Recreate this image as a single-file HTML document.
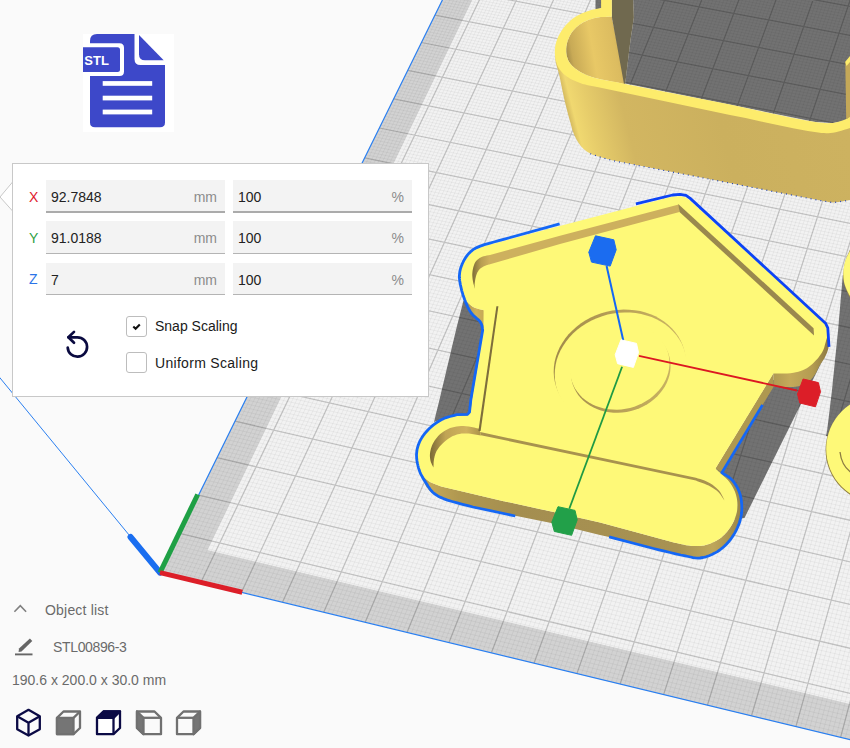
<!DOCTYPE html>
<html><head><meta charset="utf-8"><title>Cura</title>
<style>
html,body{margin:0;padding:0}
body{width:850px;height:748px;overflow:hidden;background:#fafafa;position:relative;font-family:"Liberation Sans",sans-serif;}
#scene{position:absolute;left:0;top:0}
.abs{position:absolute}
#stl{position:absolute;left:83px;top:34px;width:91px;height:98px;background:#fff}
#panel{position:absolute;left:12px;top:163px;width:415px;height:232px;background:#fff;border:1px solid #c8c8c8;box-sizing:content-box}
.fld{position:absolute;height:31px;background:#f3f3f3;border-bottom:1px solid #b4b4b4;font-size:14px;color:#222}
.fld span{position:absolute;top:9px;line-height:16px}
.fld[style*="height:32px"] span{top:9px}
.fld .u{color:#8c8c8c}
.lbl{position:absolute;font-size:14px;line-height:16px}
.cb{position:absolute;width:19px;height:19px;border:1px solid #bdbdbd;border-radius:3px;background:#fff}
.cbl{position:absolute;font-size:14px;line-height:16px;color:#1a1a1a}
.t{position:absolute;font-size:14px;line-height:16px;color:#6a6a6a;white-space:nowrap}

</style></head><body>
<svg id="scene" width="850" height="748" viewBox="0 0 850 748">
<polygon points="160.4,572.7 1305.0,849.9 1428.2,-155.4 587.7,-295.1" fill="#d2d2d2"/>
<polygon points="207.4,550.1 1309.4,813.9 1428.2,-155.4 612.1,-291.1" fill="#f2f2f2"/>
<path d="M164.4 573.7L590.8 -294.6M168.5 574.7L593.8 -294.1M172.5 575.6L596.9 -293.6M176.5 576.6L599.9 -293.1M180.6 577.6L602.9 -292.6M184.6 578.6L606.0 -292.1M188.7 579.5L609.0 -291.6M192.7 580.5L612.1 -291.1M196.8 581.5L615.1 -290.6M204.9 583.5L621.2 -289.6M208.9 584.5L624.2 -289.0M213.0 585.4L627.3 -288.5M217.1 586.4L630.4 -288.0M221.1 587.4L633.4 -287.5M225.2 588.4L636.5 -287.0M229.3 589.4L639.5 -286.5M233.4 590.4L642.6 -286.0M237.4 591.4L645.6 -285.5M245.6 593.3L651.8 -284.5M249.7 594.3L654.8 -284.0M253.8 595.3L657.9 -283.5M257.9 596.3L661.0 -282.9M262.0 597.3L664.0 -282.4M266.1 598.3L667.1 -281.9M270.2 599.3L670.2 -281.4M274.3 600.3L673.2 -280.9M278.4 601.3L676.3 -280.4M286.6 603.3L682.5 -279.4M290.7 604.3L685.5 -278.9M294.8 605.2L688.6 -278.3M298.9 606.2L691.7 -277.8M303.1 607.2L694.8 -277.3M307.2 608.2L697.9 -276.8M311.3 609.2L701.0 -276.3M315.4 610.2L704.1 -275.8M319.6 611.2L707.1 -275.3M327.8 613.2L713.3 -274.2M332.0 614.2L716.4 -273.7M336.1 615.3L719.5 -273.2M340.3 616.3L722.6 -272.7M344.4 617.3L725.7 -272.2M348.6 618.3L728.8 -271.7M352.7 619.3L731.9 -271.2M356.9 620.3L735.0 -270.6M361.0 621.3L738.1 -270.1M369.4 623.3L744.3 -269.1M373.5 624.3L747.4 -268.6M377.7 625.3L750.5 -268.1M381.9 626.3L753.7 -267.5M386.1 627.3L756.8 -267.0M390.2 628.4L759.9 -266.5M394.4 629.4L763.0 -266.0M398.6 630.4L766.1 -265.5M402.8 631.4L769.2 -264.9M411.2 633.4L775.5 -263.9M415.4 634.4L778.6 -263.4M419.6 635.5L781.7 -262.9M423.8 636.5L784.9 -262.4M428.0 637.5L788.0 -261.8M432.2 638.5L791.1 -261.3M436.4 639.5L794.2 -260.8M440.6 640.6L797.4 -260.3M444.8 641.6L800.5 -259.8M453.3 643.6L806.8 -258.7M457.5 644.6L809.9 -258.2M461.7 645.7L813.1 -257.7M465.9 646.7L816.2 -257.1M470.2 647.7L819.3 -256.6M474.4 648.7L822.5 -256.1M478.6 649.8L825.6 -255.6M482.9 650.8L828.8 -255.1M487.1 651.8L831.9 -254.5M495.6 653.9L838.2 -253.5M499.9 654.9L841.4 -253.0M504.1 655.9L844.5 -252.4M508.4 657.0L847.7 -251.9M512.7 658.0L850.9 -251.4M516.9 659.0L854.0 -250.9M521.2 660.1L857.2 -250.3M525.5 661.1L860.3 -249.8M529.7 662.1L863.5 -249.3M538.3 664.2L869.8 -248.2M542.6 665.2L873.0 -247.7M546.8 666.3L876.2 -247.2M551.1 667.3L879.4 -246.6M555.4 668.4L882.5 -246.1M559.7 669.4L885.7 -245.6M564.0 670.4L888.9 -245.1M568.3 671.5L892.1 -244.5M572.6 672.5L895.2 -244.0M581.2 674.6L901.6 -242.9M585.5 675.6L904.8 -242.4M589.8 676.7L908.0 -241.9M594.2 677.7L911.2 -241.4M598.5 678.8L914.4 -240.8M602.8 679.8L917.5 -240.3M607.1 680.9L920.7 -239.8M611.4 681.9L923.9 -239.2M615.8 683.0L927.1 -238.7M624.4 685.1L933.5 -237.6M628.8 686.1L936.7 -237.1M633.1 687.2L939.9 -236.6M637.5 688.2L943.1 -236.0M641.8 689.3L946.3 -235.5M646.2 690.3L949.5 -235.0M650.5 691.4L952.7 -234.5M654.9 692.4L956.0 -233.9M659.2 693.5L959.2 -233.4M668.0 695.6L965.6 -232.3M672.3 696.7L968.8 -231.8M676.7 697.7L972.0 -231.2M681.1 698.8L975.2 -230.7M685.5 699.8L978.5 -230.2M689.8 700.9L981.7 -229.6M694.2 702.0L984.9 -229.1M698.6 703.0L988.1 -228.6M703.0 704.1L991.4 -228.0M711.8 706.2L997.8 -227.0M716.2 707.3L1001.0 -226.4M720.6 708.3L1004.3 -225.9M725.0 709.4L1007.5 -225.3M729.4 710.5L1010.8 -224.8M733.8 711.6L1014.0 -224.3M738.2 712.6L1017.2 -223.7M742.6 713.7L1020.5 -223.2M747.1 714.8L1023.7 -222.7M755.9 716.9L1030.2 -221.6M760.3 718.0L1033.5 -221.0M764.8 719.0L1036.7 -220.5M769.2 720.1L1040.0 -220.0M773.6 721.2L1043.2 -219.4M778.1 722.3L1046.5 -218.9M782.5 723.3L1049.7 -218.3M787.0 724.4L1053.0 -217.8M791.4 725.5L1056.2 -217.3M800.3 727.7L1062.7 -216.2M804.8 728.7L1066.0 -215.6M809.2 729.8L1069.3 -215.1M813.7 730.9L1072.5 -214.5M818.2 732.0L1075.8 -214.0M822.6 733.1L1079.1 -213.5M827.1 734.1L1082.4 -212.9M831.6 735.2L1085.6 -212.4M836.1 736.3L1088.9 -211.8M845.1 738.5L1095.5 -210.7M849.5 739.6L1098.7 -210.2M854.0 740.7L1102.0 -209.6M858.5 741.8L1105.3 -209.1M863.0 742.8L1108.6 -208.6M867.5 743.9L1111.9 -208.0M872.0 745.0L1115.2 -207.5M876.5 746.1L1118.4 -206.9M881.1 747.2L1121.7 -206.4M890.1 749.4L1128.3 -205.3M894.6 750.5L1131.6 -204.7M899.1 751.6L1134.9 -204.2M903.7 752.7L1138.2 -203.6M908.2 753.8L1141.5 -203.1M912.7 754.9L1144.8 -202.5M917.3 756.0L1148.1 -202.0M921.8 757.1L1151.4 -201.4M926.3 758.2L1154.7 -200.9M935.4 760.4L1161.4 -199.8M940.0 761.5L1164.7 -199.2M944.5 762.6L1168.0 -198.7M949.1 763.7L1171.3 -198.1M953.7 764.8L1174.6 -197.6M958.2 765.9L1177.9 -197.0M962.8 767.0L1181.3 -196.5M967.4 768.1L1184.6 -195.9M971.9 769.2L1187.9 -195.4M981.1 771.4L1194.5 -194.3M985.7 772.5L1197.9 -193.7M990.3 773.7L1201.2 -193.2M994.9 774.8L1204.5 -192.6M999.5 775.9L1207.9 -192.1M1004.0 777.0L1211.2 -191.5M1008.6 778.1L1214.5 -190.9M1013.2 779.2L1217.9 -190.4M1017.9 780.3L1221.2 -189.8M1027.1 782.6L1227.9 -188.7M1031.7 783.7L1231.3 -188.2M1036.3 784.8L1234.6 -187.6M1040.9 785.9L1237.9 -187.1M1045.6 787.0L1241.3 -186.5M1050.2 788.2L1244.7 -185.9M1054.8 789.3L1248.0 -185.4M1059.5 790.4L1251.4 -184.8M1064.1 791.5L1254.7 -184.3M1073.4 793.8L1261.4 -183.1M1078.0 794.9L1264.8 -182.6M1082.7 796.0L1268.2 -182.0M1087.3 797.2L1271.5 -181.5M1092.0 798.3L1274.9 -180.9M1096.7 799.4L1278.3 -180.4M1101.3 800.5L1281.6 -179.8M1106.0 801.7L1285.0 -179.2M1110.7 802.8L1288.4 -178.7M1120.0 805.1L1295.1 -177.5M1124.7 806.2L1298.5 -177.0M1129.4 807.3L1301.9 -176.4M1134.1 808.5L1305.3 -175.9M1138.8 809.6L1308.7 -175.3M1143.4 810.7L1312.0 -174.7M1148.1 811.9L1315.4 -174.2M1152.8 813.0L1318.8 -173.6M1157.5 814.2L1322.2 -173.0M1167.0 816.4L1329.0 -171.9M1171.7 817.6L1332.4 -171.4M1176.4 818.7L1335.8 -170.8M1181.1 819.9L1339.2 -170.2M1185.8 821.0L1342.6 -169.7M1190.6 822.2L1346.0 -169.1M1195.3 823.3L1349.4 -168.5M1200.0 824.4L1352.8 -168.0M1204.8 825.6L1356.2 -167.4M1214.3 827.9L1363.0 -166.3M1219.0 829.0L1366.4 -165.7M1223.8 830.2L1369.9 -165.1M1228.5 831.3L1373.3 -164.6M1233.3 832.5L1376.7 -164.0M1238.0 833.6L1380.1 -163.4M1242.8 834.8L1383.5 -162.9M1247.6 836.0L1387.0 -162.3M1252.3 837.1L1390.4 -161.7M1261.9 839.4L1397.2 -160.6M1266.7 840.6L1400.7 -160.0M1271.4 841.7L1404.1 -159.4M1276.2 842.9L1407.5 -158.9M1281.0 844.1L1411.0 -158.3M1285.8 845.2L1414.4 -157.7M1290.6 846.4L1417.8 -157.2M1295.4 847.5L1421.3 -156.6M1300.2 848.7L1424.7 -156.0M162.4 568.7L1305.6 845.2M164.3 564.8L1306.2 840.5M166.3 560.8L1306.8 835.8M168.2 556.9L1307.3 831.1M170.1 552.9L1307.9 826.4M172.1 549.0L1308.5 821.8M174.0 545.1L1309.0 817.1M175.9 541.2L1309.6 812.5M177.8 537.3L1310.2 807.9M181.6 529.6L1311.3 798.7M183.5 525.7L1311.9 794.1M185.4 521.8L1312.4 789.6M187.3 518.0L1313.0 785.0M189.2 514.2L1313.5 780.5M191.1 510.3L1314.1 775.9M193.0 506.5L1314.6 771.4M194.9 502.7L1315.2 766.9M196.7 498.9L1315.7 762.4M200.5 491.3L1316.8 753.5M202.3 487.6L1317.4 749.0M204.2 483.8L1317.9 744.6M206.0 480.1L1318.5 740.1M207.9 476.3L1319.0 735.7M209.7 472.6L1319.6 731.3M211.5 468.9L1320.1 726.9M213.4 465.1L1320.6 722.5M215.2 461.4L1321.2 718.2M218.8 454.0L1322.2 709.4M220.6 450.4L1322.8 705.1M222.5 446.7L1323.3 700.8M224.3 443.0L1323.8 696.4M226.1 439.4L1324.4 692.1M227.9 435.7L1324.9 687.8M229.6 432.1L1325.4 683.6M231.4 428.5L1325.9 679.3M233.2 424.8L1326.5 675.0M236.8 417.6L1327.5 666.5M238.5 414.0L1328.0 662.3M240.3 410.5L1328.5 658.1M242.1 406.9L1329.0 653.9M243.8 403.3L1329.6 649.7M245.6 399.7L1330.1 645.5M247.3 396.2L1330.6 641.3M249.1 392.7L1331.1 637.1M250.8 389.1L1331.6 633.0M254.3 382.1L1332.6 624.7M256.0 378.6L1333.1 620.6M257.7 375.1L1333.6 616.5M259.4 371.6L1334.1 612.4M261.2 368.1L1334.6 608.3M262.9 364.6L1335.1 604.2M264.6 361.1L1335.6 600.1M266.3 357.7L1336.1 596.1M268.0 354.2L1336.6 592.0M271.4 347.3L1337.6 584.0M273.1 343.9L1338.1 579.9M274.8 340.5L1338.6 575.9M276.4 337.1L1339.1 571.9M278.1 333.7L1339.6 567.9M279.8 330.3L1340.1 564.0M281.5 326.9L1340.5 560.0M283.1 323.5L1341.0 556.0M284.8 320.1L1341.5 552.1M288.1 313.4L1342.5 544.2M289.7 310.0L1343.0 540.3M291.4 306.7L1343.4 536.4M293.0 303.4L1343.9 532.5M294.7 300.0L1344.4 528.6M296.3 296.7L1344.9 524.7M297.9 293.4L1345.3 520.8M299.6 290.1L1345.8 517.0M301.2 286.8L1346.3 513.1M304.4 280.2L1347.2 505.4M306.0 277.0L1347.7 501.6M307.6 273.7L1348.2 497.8M309.3 270.4L1348.6 494.0M310.9 267.2L1349.1 490.2M312.5 263.9L1349.6 486.4M314.0 260.7L1350.0 482.6M315.6 257.5L1350.5 478.9M317.2 254.2L1350.9 475.1M320.4 247.8L1351.9 467.6M322.0 244.6L1352.3 463.9M323.5 241.4L1352.8 460.2M325.1 238.2L1353.2 456.4M326.7 235.0L1353.7 452.7M328.2 231.9L1354.1 449.0M329.8 228.7L1354.6 445.4M331.4 225.5L1355.0 441.7M332.9 222.4L1355.5 438.0M336.0 216.1L1356.4 430.7M337.5 213.0L1356.8 427.1M339.1 209.8L1357.3 423.4M340.6 206.7L1357.7 419.8M342.2 203.6L1358.2 416.2M343.7 200.5L1358.6 412.6M345.2 197.4L1359.0 409.0M346.7 194.3L1359.5 405.4M348.2 191.2L1359.9 401.8M351.3 185.1L1360.8 394.6M352.8 182.0L1361.2 391.1M354.3 179.0L1361.7 387.5M355.8 175.9L1362.1 384.0M357.3 172.9L1362.5 380.5M358.8 169.8L1363.0 376.9M360.3 166.8L1363.4 373.4M361.8 163.8L1363.8 369.9M363.3 160.8L1364.2 366.4M366.2 154.8L1365.1 359.4M367.7 151.8L1365.5 356.0M369.2 148.8L1366.0 352.5M370.6 145.8L1366.4 349.0M372.1 142.8L1366.8 345.6M373.6 139.8L1367.2 342.2M375.0 136.9L1367.6 338.7M376.5 133.9L1368.1 335.3M377.9 130.9L1368.5 331.9M380.8 125.1L1369.3 325.1M382.3 122.1L1369.7 321.7M383.7 119.2L1370.1 318.3M385.2 116.3L1370.6 314.9M386.6 113.4L1371.0 311.5M388.0 110.5L1371.4 308.2M389.5 107.6L1371.8 304.8M390.9 104.7L1372.2 301.5M392.3 101.8L1372.6 298.1M395.1 96.0L1373.4 291.5M396.6 93.1L1373.8 288.1M398.0 90.3L1374.2 284.8M399.4 87.4L1374.6 281.5M400.8 84.6L1375.1 278.2M402.2 81.7L1375.5 274.9M403.6 78.9L1375.9 271.7M405.0 76.0L1376.3 268.4M406.4 73.2L1376.7 265.1M409.2 67.6L1377.5 258.6M410.5 64.7L1377.8 255.4M411.9 61.9L1378.2 252.1M413.3 59.1L1378.6 248.9M414.7 56.3L1379.0 245.7M416.0 53.6L1379.4 242.5M417.4 50.8L1379.8 239.3M418.8 48.0L1380.2 236.1M420.2 45.2L1380.6 232.9M422.9 39.7L1381.4 226.5M424.2 36.9L1381.8 223.3M425.6 34.2L1382.2 220.2M426.9 31.5L1382.5 217.0M428.3 28.7L1382.9 213.9M429.6 26.0L1383.3 210.7M431.0 23.3L1383.7 207.6M432.3 20.5L1384.1 204.5M433.6 17.8L1384.5 201.3M436.3 12.4L1385.2 195.1M437.6 9.7L1385.6 192.0M439.0 7.0L1386.0 188.9M440.3 4.3L1386.4 185.8M441.6 1.7L1386.7 182.7M442.9 -1.0L1387.1 179.7M444.2 -3.7L1387.5 176.6M445.5 -6.3L1387.9 173.5M446.9 -9.0L1388.2 170.5M449.5 -14.3L1389.0 164.4M450.8 -17.0L1389.4 161.4M452.1 -19.6L1389.7 158.3M453.4 -22.2L1390.1 155.3M454.7 -24.8L1390.5 152.3M455.9 -27.5L1390.8 149.3M457.2 -30.1L1391.2 146.3M458.5 -32.7L1391.6 143.3M459.8 -35.3L1391.9 140.3M462.4 -40.5L1392.7 134.4M463.6 -43.1L1393.0 131.4M464.9 -45.7L1393.4 128.4M466.2 -48.3L1393.8 125.5M467.5 -50.8L1394.1 122.5M468.7 -53.4L1394.5 119.6M470.0 -56.0L1394.8 116.6M471.2 -58.5L1395.2 113.7M472.5 -61.1L1395.6 110.8M475.0 -66.2L1396.3 104.9M476.3 -68.7L1396.6 102.0M477.5 -71.2L1397.0 99.1M478.7 -73.8L1397.3 96.2M480.0 -76.3L1397.7 93.4M481.2 -78.8L1398.0 90.5M482.5 -81.3L1398.4 87.6M483.7 -83.8L1398.7 84.7M484.9 -86.3L1399.1 81.9M487.4 -91.3L1399.8 76.2M488.6 -93.8L1400.1 73.3M489.8 -96.3L1400.5 70.5M491.1 -98.8L1400.8 67.7M492.3 -101.2L1401.2 64.8M493.5 -103.7L1401.5 62.0M494.7 -106.2L1401.9 59.2M495.9 -108.6L1402.2 56.4M497.1 -111.1L1402.6 53.6M499.5 -116.0L1403.2 48.0M500.7 -118.4L1403.6 45.2M501.9 -120.9L1403.9 42.4M503.1 -123.3L1404.3 39.7M504.3 -125.7L1404.6 36.9M505.5 -128.1L1404.9 34.1M506.7 -130.6L1405.3 31.4M507.9 -133.0L1405.6 28.6M509.1 -135.4L1406.0 25.9M511.5 -140.2L1406.6 20.4M512.6 -142.6L1407.0 17.7M513.8 -145.0L1407.3 14.9M515.0 -147.3L1407.6 12.2M516.2 -149.7L1408.0 9.5M517.3 -152.1L1408.3 6.8M518.5 -154.5L1408.6 4.1M519.7 -156.8L1409.0 1.4M520.8 -159.2L1409.3 -1.3M523.1 -163.9L1409.9 -6.6M524.3 -166.3L1410.3 -9.3M525.4 -168.6L1410.6 -12.0M526.6 -170.9L1410.9 -14.6M527.7 -173.3L1411.2 -17.3M528.9 -175.6L1411.6 -19.9M530.0 -177.9L1411.9 -22.6M531.2 -180.2L1412.2 -25.2M532.3 -182.6L1412.5 -27.9M534.6 -187.2L1413.2 -33.1M535.7 -189.5L1413.5 -35.7M536.9 -191.8L1413.8 -38.3M538.0 -194.1L1414.1 -40.9M539.1 -196.4L1414.5 -43.5M540.2 -198.6L1414.8 -46.1M541.4 -200.9L1415.1 -48.7M542.5 -203.2L1415.4 -51.3M543.6 -205.5L1415.7 -53.9M545.8 -210.0L1416.4 -59.1M547.0 -212.3L1416.7 -61.6M548.1 -214.5L1417.0 -64.2M549.2 -216.8L1417.3 -66.7M550.3 -219.0L1417.6 -69.3M551.4 -221.3L1417.9 -71.8M552.5 -223.5L1418.2 -74.4M553.6 -225.7L1418.5 -76.9M554.7 -228.0L1418.9 -79.4M556.9 -232.4L1419.5 -84.5M558.0 -234.6L1419.8 -87.0M559.1 -236.9L1420.1 -89.5M560.1 -239.1L1420.4 -92.0M561.2 -241.3L1420.7 -94.5M562.3 -243.5L1421.0 -97.0M563.4 -245.7L1421.3 -99.5M564.5 -247.9L1421.6 -102.0M565.6 -250.1L1421.9 -104.5M567.7 -254.4L1422.5 -109.4M568.8 -256.6L1422.8 -111.9M569.9 -258.8L1423.1 -114.3M570.9 -260.9L1423.4 -116.8M572.0 -263.1L1423.7 -119.2M573.1 -265.3L1424.0 -121.7M574.1 -267.4L1424.3 -124.1M575.2 -269.6L1424.6 -126.6M576.2 -271.7L1424.9 -129.0M578.3 -276.0L1425.5 -133.8M579.4 -278.1L1425.8 -136.3M580.4 -280.3L1426.1 -138.7M581.5 -282.4L1426.4 -141.1M582.5 -284.5L1426.7 -143.5M583.6 -286.7L1427.0 -145.9M584.6 -288.8L1427.3 -148.3M585.7 -290.9L1427.6 -150.7M586.7 -293.0L1427.9 -153.1" stroke="#000" stroke-opacity="0.045" stroke-width="1" fill="none"/>
<path d="M200.8 582.5L618.1 -290.1M241.5 592.3L648.7 -285.0M282.5 602.3L679.4 -279.9M323.7 612.2L710.2 -274.8M365.2 622.3L741.2 -269.6M407.0 632.4L772.4 -264.4M449.0 642.6L803.6 -259.2M491.4 652.8L835.1 -254.0M534.0 663.2L866.7 -248.8M576.9 673.6L898.4 -243.5M620.1 684.0L930.3 -238.2M663.6 694.6L962.4 -232.9M707.4 705.2L994.6 -227.5M751.5 715.8L1027.0 -222.1M795.9 726.6L1059.5 -216.7M840.6 737.4L1092.2 -211.3M885.6 748.3L1125.0 -205.8M930.9 759.3L1158.0 -200.3M976.5 770.3L1191.2 -194.8M1022.5 781.5L1224.6 -189.3M1068.7 792.7L1258.1 -183.7M1115.3 803.9L1291.8 -178.1M1162.3 815.3L1325.6 -172.5M1209.5 826.7L1359.6 -166.8M1257.1 838.3L1393.8 -161.1M1305.0 849.9L1428.2 -155.4M179.7 533.4L1310.7 803.3M198.6 495.1L1316.3 757.9M217.0 457.7L1321.7 713.8M235.0 421.2L1327.0 670.8M252.5 385.6L1332.1 628.9M269.7 350.8L1337.1 588.0M286.4 316.8L1342.0 548.1M302.8 283.5L1346.8 509.3M318.8 251.0L1351.4 471.4M334.5 219.2L1355.9 434.3M349.8 188.2L1360.4 398.2M364.7 157.8L1364.7 362.9M379.4 128.0L1368.9 328.5M393.7 98.9L1373.0 294.8M407.8 70.4L1377.1 261.9M421.5 42.5L1381.0 229.7M435.0 15.1L1384.9 198.2M448.2 -11.7L1388.6 167.4M461.1 -37.9L1392.3 137.3M473.8 -63.6L1395.9 107.9M486.2 -88.8L1399.4 79.0M498.3 -113.5L1402.9 50.8M510.3 -137.8L1406.3 23.1M522.0 -161.6L1409.6 -4.0M533.5 -184.9L1412.9 -30.5M544.7 -207.7L1416.0 -56.5M555.8 -230.2L1419.2 -82.0M566.6 -252.2L1422.2 -106.9M577.3 -273.9L1425.2 -131.4M587.7 -295.1L1428.2 -155.4" stroke="#000" stroke-opacity="0.2" stroke-width="1.25" fill="none"/>
<path d="M587.7 -295.1L160.4 572.7L1305.0 849.9" stroke="#2a7ff0" stroke-width="1.2" fill="none"/>
<path d="M160 572.6L-2 375.5" stroke="#2a7ff0" stroke-width="1" fill="none"/>
<path d="M160 572.6L130.5 537" stroke="#1a6ef0" stroke-width="6" stroke-linecap="round" fill="none"/>
<path d="M160 572.6L197.7 494.5" stroke="#1fa045" stroke-width="5" fill="none"/>
<path d="M160 572.6L242.2 592.3" stroke="#dc1e28" stroke-width="5" fill="none"/>
<defs>
<linearGradient id="gEndIn" gradientUnits="userSpaceOnUse" x1="564" y1="50" x2="626" y2="39"><stop offset="0" stop-color="#9c8646"/><stop offset="0.12" stop-color="#c8aa56"/><stop offset="0.45" stop-color="#e8c866"/><stop offset="0.8" stop-color="#dcbc60"/><stop offset="1" stop-color="#c4a656"/></linearGradient>
<linearGradient id="gWall" gradientUnits="userSpaceOnUse" x1="558" y1="100" x2="853" y2="26"><stop offset="0" stop-color="#8a7438"/><stop offset="0.012" stop-color="#c8ac58"/><stop offset="0.04" stop-color="#f0d870"/><stop offset="0.09" stop-color="#e6cc6a"/><stop offset="0.2" stop-color="#d2b661"/><stop offset="0.5" stop-color="#cbb05e"/><stop offset="0.9" stop-color="#cdb260"/><stop offset="0.97" stop-color="#dcc068"/><stop offset="1" stop-color="#d8bc64"/></linearGradient>
<linearGradient id="gBaseR" gradientUnits="userSpaceOnUse" x1="420" y1="0" x2="742" y2="0"><stop offset="0" stop-color="#8c7840"/><stop offset="0.03" stop-color="#c4a858"/><stop offset="0.12" stop-color="#b09850"/><stop offset="0.3" stop-color="#a48e50"/><stop offset="0.8" stop-color="#a89252"/><stop offset="0.91" stop-color="#bea65a"/><stop offset="1" stop-color="#9a8446"/></linearGradient>
<linearGradient id="gEaveR" gradientUnits="userSpaceOnUse" x1="773" y1="0" x2="829" y2="0"><stop offset="0" stop-color="#b09a52"/><stop offset="0.3" stop-color="#c4aa5a"/><stop offset="0.7" stop-color="#b49c52"/><stop offset="1" stop-color="#8c7840"/></linearGradient>
<linearGradient id="gEaveL" gradientUnits="userSpaceOnUse" x1="464" y1="0" x2="484" y2="0"><stop offset="0" stop-color="#a89048"/><stop offset="0.6" stop-color="#d0b25c"/><stop offset="1" stop-color="#c4a856"/></linearGradient>
<linearGradient id="gInL" gradientUnits="userSpaceOnUse" x1="472" y1="0" x2="490" y2="0"><stop offset="0" stop-color="#7c6a36"/><stop offset="0.5" stop-color="#b89e52"/><stop offset="1" stop-color="#d0b25e"/></linearGradient>
<linearGradient id="gInB" gradientUnits="userSpaceOnUse" x1="430" y1="0" x2="482" y2="0"><stop offset="0" stop-color="#7c6a36"/><stop offset="0.3" stop-color="#c0a454"/><stop offset="0.7" stop-color="#d0b25e"/><stop offset="1" stop-color="#a89048"/></linearGradient>
</defs>
<polygon points="633.2,0.0 850.0,0.0 850.0,120.0 832.9,122.9 815.3,122.0 625.2,83.5 630.5,40.1 633.9,17.4" fill="rgba(0,0,0,0.53)" />
<polygon points="595.5,0.0 602.0,0.0 602.0,8.0 595.5,9.6" fill="rgba(0,0,0,0.53)" />
<polygon points="555.4,52.0 555.4,53.5 555.4,55.0 555.3,56.6 555.4,58.1 555.4,59.7 555.6,61.3 556.0,63.3 556.5,65.4 557.1,67.5 557.8,69.8 558.5,72.1 559.1,74.5 559.9,77.9 560.6,81.6 561.4,85.4 562.2,89.4 563.0,93.3 563.8,97.1 564.7,100.9 565.6,104.8 566.6,108.6 567.6,112.4 568.5,116.1 569.5,119.6 570.3,122.3 571.0,125.0 571.7,127.5 572.4,130.0 573.3,132.4 574.2,134.7 575.1,136.8 576.1,138.8 577.2,140.7 578.3,142.6 579.5,144.3 580.8,146.0 582.2,147.5 583.6,148.9 585.2,150.2 586.8,151.4 588.5,152.5 590.2,153.5 592.0,154.4 593.8,155.1 595.7,155.7 597.7,156.2 599.6,156.7 601.5,157.3 603.4,157.9 605.3,158.4 607.2,158.9 609.1,159.5 611.0,160.0 612.9,160.5 730.0,182.9 745.6,185.9 762.1,189.2 778.7,192.4 794.3,195.5 807.8,198.1 818.2,200.0 821.3,200.6 824.0,201.2 826.2,201.6 828.4,202.0 830.5,202.3 832.9,202.4 835.7,202.3 838.5,202.0 841.4,201.5 844.3,201.0 847.1,200.5 850.0,200.0 850.0,123.0 832.9,127.5 818.0,127.0 730.0,109.5 611.0,85.4 590.0,81.0 575.0,73.0 564.0,60.0 561.0,50.0" fill="url(#gWall)" />
<polyline points="590.2,153.7 601.5,157.5 612.9,160.7 730.0,183.1 818.2,200.2 832.9,202.6 850.0,200.2" fill="none" stroke="#2444b4" stroke-width="1.2" stroke-dasharray="1 4"/>
<polygon points="611.8,16.7 609.6,16.8 607.4,16.8 605.1,16.9 602.9,16.9 600.7,17.1 598.5,17.4 596.2,17.8 593.9,18.3 591.7,18.9 589.4,19.6 587.2,20.4 585.1,21.4 582.9,22.6 580.7,24.0 578.6,25.5 576.6,27.1 574.7,28.9 573.1,30.7 571.7,32.5 570.5,34.5 569.4,36.6 568.5,38.7 567.7,40.8 567.1,42.8 566.7,44.6 566.4,46.4 566.2,48.2 566.2,50.0 566.2,51.8 566.4,53.5 566.7,55.1 567.0,56.7 567.5,58.3 568.1,59.9 568.8,61.4 569.7,62.8 570.8,64.3 572.1,65.7 573.5,67.1 575.1,68.4 576.7,69.6 578.4,70.8 580.3,72.0 582.3,73.1 584.5,74.1 586.7,75.1 589.1,76.0 591.8,76.9 596.3,78.2 601.4,79.4 606.9,80.6 612.7,81.7 618.4,82.8 623.9,83.9 625.2,83.5" fill="url(#gEndIn)" />
<polygon points="611.8,0.0 633.2,0.0 633.9,17.4 630.5,40.1 625.2,84.0 623.9,83.5 611.8,16.7" fill="#70694f" />
<polygon points="845.3,62.0 850.0,57.0 850.0,118.0 846.2,119.1" fill="#c4a858" />
<polygon points="601.1,0.0 601.1,8.0 599.1,8.4 597.1,8.8 595.1,9.2 593.2,9.6 591.1,10.1 589.1,10.7 586.7,11.5 584.2,12.5 581.6,13.5 579.1,14.7 576.7,16.0 574.4,17.4 572.2,19.1 570.0,20.9 567.9,22.9 565.9,25.0 564.1,27.2 562.4,29.4 560.9,31.7 559.6,34.1 558.3,36.5 557.3,39.0 556.4,41.6 555.7,44.1 555.2,46.5 555.0,49.1 554.8,51.6 554.9,54.1 555.1,56.5 555.4,58.8 555.8,60.7 556.4,62.6 557.0,64.5 557.8,66.2 558.7,67.9 559.7,69.5 560.9,71.0 562.2,72.5 563.6,73.9 565.2,75.2 566.8,76.4 568.5,77.6 570.6,78.9 572.8,80.0 575.2,81.1 577.6,82.1 580.1,83.1 582.6,83.9 585.2,84.6 587.8,85.3 590.4,85.8 593.1,86.3 595.8,86.8 598.4,87.3 730.0,114.9 745.6,118.1 762.1,121.7 778.7,125.3 794.3,128.5 807.8,131.1 818.2,132.6 821.3,132.9 824.0,133.1 826.3,133.2 828.4,133.2 830.5,133.1 832.9,132.8 835.7,132.3 838.5,131.6 841.4,130.7 844.3,129.8 847.1,128.9 850.0,128.0 850.0,117.0 849.4,117.3 848.8,117.7 848.3,118.0 847.7,118.4 847.0,118.7 846.2,119.1 844.5,119.8 842.5,120.5 840.2,121.3 837.8,122.0 835.3,122.5 832.9,122.9 830.3,123.1 827.7,123.2 825.1,123.1 822.2,122.8 819.0,122.5 815.3,122.0 804.8,120.3 791.6,117.8 776.6,114.6 760.8,111.2 745.0,107.7 730.0,104.6 623.9,83.7 618.4,82.6 612.7,81.5 606.9,80.5 601.4,79.4 596.3,78.2 591.8,76.9 589.1,76.0 586.7,75.1 584.5,74.1 582.3,73.1 580.3,72.0 578.4,70.8 576.7,69.6 575.1,68.4 573.5,67.1 572.1,65.7 570.8,64.3 569.7,62.8 568.8,61.4 568.1,59.9 567.5,58.3 567.0,56.7 566.7,55.1 566.4,53.5 566.2,51.8 566.2,50.0 566.2,48.2 566.4,46.4 566.7,44.6 567.1,42.8 567.7,40.8 568.5,38.7 569.4,36.6 570.5,34.5 571.7,32.5 573.1,30.7 574.7,28.9 576.6,27.1 578.6,25.5 580.7,24.0 582.9,22.6 585.1,21.4 587.2,20.4 589.4,19.6 591.7,18.9 593.9,18.3 596.2,17.8 598.5,17.4 600.7,17.1 602.9,16.9 605.1,16.9 607.4,16.8 609.6,16.8 611.8,16.7 611.8,0.0" fill="#fdec6c" />
<polygon points="845.3,61.8 850.0,56.0 850.0,62.0 846.5,66.0" fill="#fdec6c" />
<polygon points="842.8,275.0 850.0,275.0 850.0,440.0 826.0,436.0 827.2,430.0 832.0,390.0 838.1,330.0" fill="rgba(0,0,0,0.53)" />
<polygon points="850.0,249.5 849.2,251.4 848.4,253.2 847.6,255.1 846.8,257.0 846.1,258.9 845.5,260.8 845.0,262.8 844.5,264.8 844.1,266.8 843.8,268.8 843.6,270.8 843.4,272.8 843.3,274.6 843.3,276.4 843.4,278.2 843.5,280.0 843.8,281.7 844.1,283.5 844.6,285.3 845.2,287.2 845.9,289.1 846.6,290.9 847.4,292.6 848.1,294.2 848.6,295.2 849.1,296.1 849.6,297.0 850.0,297.8 850.5,298.6 851.0,299.5 860.0,275.0" fill="#a08c48" />
<polygon points="851.0,249.0 850.0,250.9 849.0,252.8 848.0,254.7 847.1,256.6 846.2,258.5 845.5,260.5 844.9,262.5 844.4,264.5 844.0,266.5 843.7,268.5 843.5,270.5 843.4,272.5 843.4,274.3 843.4,276.1 843.5,277.8 843.7,279.5 843.9,281.3 844.3,283.0 844.8,284.8 845.5,286.8 846.3,288.7 847.1,290.5 847.9,292.2 848.6,293.6 849.0,294.4 849.4,295.1 849.8,295.7 850.2,296.3 850.6,296.9 851.0,297.5 860.0,275.0" fill="#fef978" />
<circle cx="878.9" cy="449.9" r="53.3" fill="#8c7a3c"/>
<circle cx="879.5" cy="449.0" r="53.3" fill="#fef978"/>
<path d="M840 452C841 461 845 468 851 472.500" stroke="#8c7c42" stroke-width="1.300" fill="none"/>
<polygon points="463.4,300.8 490.0,320.0 490.0,420.0 460.0,425.0 443.4,418.7 434.0,422.0 439.4,400.0 456.0,330.0" fill="rgba(0,0,0,0.53)" />
<polygon points="770.0,380.0 800.0,380.0 816.0,370.0 822.7,360.0 763.3,480.0 744.5,518.0 730.0,520.0 715.0,470.0" fill="rgba(0,0,0,0.53)" />
<polygon points="464.7,299.5 465.1,299.9 465.5,300.4 466.0,300.8 466.4,301.2 466.9,301.7 467.4,302.2 468.3,303.0 469.3,304.0 470.4,304.9 471.6,305.9 472.8,306.8 474.1,307.5 475.6,308.1 477.2,308.6 478.9,309.1 480.6,309.4 482.3,309.8 484.0,310.2 484.0,325.0 483.5,324.6 483.0,324.1 482.4,323.7 481.9,323.3 481.3,322.8 480.7,322.2 479.4,321.0 477.8,319.6 476.1,318.1 474.5,316.4 472.8,314.7 471.4,312.9 470.1,310.9 468.9,308.7 467.8,306.4 466.8,304.1 465.8,301.8 464.7,299.5" fill="url(#gEaveL)" />
<polygon points="827.5,333.0 827.7,335.3 828.1,337.7 828.4,340.1 828.6,342.4 828.7,344.7 828.6,346.8 828.3,348.5 827.9,350.1 827.4,351.6 826.9,353.1 826.2,354.6 825.5,356.1 824.6,357.9 823.5,359.7 822.3,361.5 821.1,363.3 819.9,365.1 818.9,366.8 818.2,368.2 817.5,369.6 816.9,370.9 816.3,372.3 815.6,373.5 814.8,374.8 813.8,376.1 812.8,377.4 811.7,378.7 810.5,379.9 809.3,381.0 808.0,382.0 806.8,382.8 805.5,383.6 804.1,384.2 802.8,384.8 801.4,385.4 800.1,385.8 799.0,386.1 798.0,386.4 797.0,386.5 796.0,386.7 794.8,386.8 793.5,386.9 790.8,387.0 787.7,387.0 784.3,386.9 780.8,386.7 777.2,386.6 773.8,386.5 773.2,373.0 793.5,371.0 815.0,358.0" fill="url(#gEaveR)" />
<polygon points="773.2,373.6 773.8,386.5 762.5,404.9 721.6,472.3 715.5,468.6" fill="#ae9850" />
<polygon points="424.2,477.5 425.1,478.3 426.0,479.0 426.9,479.8 427.9,480.6 428.9,481.3 430.0,482.0 431.6,482.8 433.4,483.6 435.3,484.3 437.3,485.1 439.3,485.8 441.2,486.5 463.5,491.8 504.7,501.4 551.3,511.6 600.0,522.6 632.4,531.2 674.7,542.7 677.5,543.3 680.4,543.9 683.3,544.6 686.1,545.2 688.9,545.6 691.7,545.9 694.2,546.0 696.7,546.0 699.2,546.0 701.7,545.7 704.1,545.4 706.5,544.8 709.1,544.0 711.7,543.0 714.2,541.8 716.7,540.5 719.1,539.0 721.3,537.4 723.4,535.6 725.3,533.7 727.2,531.5 728.9,529.3 730.5,527.0 731.9,524.7 733.1,522.4 734.3,520.0 735.3,517.5 736.1,515.0 736.8,512.4 737.2,509.9 737.4,507.4 737.5,504.9 737.4,502.4 737.1,499.9 736.7,497.5 736.1,495.1 735.4,492.8 734.5,490.6 733.5,488.4 732.3,486.3 731.1,484.3 729.8,482.4 728.5,480.8 727.1,479.3 725.6,477.8 724.1,476.5 722.7,475.2 721.3,473.9 720.3,472.9 719.3,472.0 718.3,471.2 717.4,470.3 716.5,469.5 715.5,468.6 721.3,472.8 723.1,474.0 725.0,475.1 726.8,476.2 728.6,477.4 730.3,478.7 731.9,480.2 733.4,482.0 734.9,484.0 736.2,486.1 737.4,488.3 738.4,490.6 739.3,492.9 740.1,495.6 740.7,498.4 741.1,501.3 741.3,504.2 741.4,507.1 741.4,509.9 741.2,512.4 740.9,514.9 740.4,517.4 739.8,519.9 739.1,522.3 738.2,524.7 737.1,527.3 735.9,529.8 734.6,532.4 733.1,534.8 731.5,537.2 729.8,539.5 728.0,541.7 726.0,543.8 724.0,545.9 721.8,547.8 719.5,549.6 717.1,551.2 714.5,552.7 711.7,554.1 708.8,555.3 705.9,556.3 702.9,557.0 700.1,557.5 697.7,557.6 695.3,557.4 693.0,557.1 690.6,556.5 688.1,556.0 685.3,555.4 680.7,554.5 675.6,553.3 670.1,552.0 664.5,550.7 658.9,549.3 653.5,548.0 609.1,537.0 600.0,535.0 551.3,523.0 515.3,515.8 472.9,506.6 441.2,498.1 439.0,496.8 436.8,495.5 434.5,494.3 432.4,492.9 430.3,491.4 428.5,489.6 426.7,487.2 425.2,484.4 423.9,481.4 422.6,478.3 421.3,475.2 420.0,472.2" fill="url(#gBaseR)" />
<polygon points="672.6,196.6 680.0,196.2 685.0,197.2 688.8,199.6 825.0,323.5 825.4,324.3 825.8,325.1 826.2,325.9 826.6,326.8 826.9,327.6 827.2,328.5 827.4,329.5 827.6,330.6 827.7,331.7 827.7,332.9 827.7,334.0 827.6,335.0 827.5,335.9 827.3,336.7 827.0,337.5 826.8,338.3 826.5,339.2 826.2,340.1 825.8,341.7 825.3,343.4 824.8,345.3 824.3,347.2 823.7,349.1 822.9,350.8 822.0,352.5 821.0,354.1 819.9,355.6 818.7,357.2 817.5,358.7 816.2,360.1 814.8,361.6 813.4,363.1 811.8,364.5 810.2,365.8 808.6,367.1 806.8,368.2 804.8,369.2 802.7,370.2 800.6,371.0 798.3,371.7 795.9,372.3 793.5,372.8 790.4,373.2 787.1,373.4 783.7,373.5 780.3,373.5 776.8,373.4 773.4,373.5 715.5,468.6 716.5,469.5 717.4,470.3 718.3,471.2 719.3,472.0 720.3,472.9 721.3,473.9 722.7,475.2 724.1,476.5 725.6,477.8 727.1,479.3 728.5,480.8 729.8,482.4 731.1,484.3 732.3,486.3 733.5,488.4 734.5,490.6 735.4,492.8 736.1,495.1 736.7,497.5 737.1,499.9 737.4,502.4 737.5,504.9 737.4,507.4 737.2,509.9 736.8,512.4 736.1,515.0 735.3,517.5 734.3,520.0 733.1,522.4 731.9,524.7 730.5,527.0 728.9,529.3 727.2,531.5 725.3,533.7 723.4,535.6 721.3,537.4 719.1,539.0 716.7,540.5 714.2,541.8 711.7,543.0 709.1,544.0 706.5,544.8 704.1,545.4 701.7,545.7 699.2,546.0 696.7,546.0 694.2,546.0 691.7,545.9 688.9,545.6 686.1,545.2 683.3,544.6 680.4,543.9 677.5,543.3 674.7,542.7 632.4,531.2 600.0,522.6 551.3,511.6 504.7,501.4 463.5,491.8 441.2,486.5 439.3,485.8 437.3,485.1 435.3,484.3 433.4,483.6 431.6,482.8 430.0,482.0 428.9,481.3 427.9,480.6 426.9,479.8 426.0,479.0 425.1,478.3 424.2,477.5 421.0,472.0 420.4,469.8 419.7,467.6 419.1,465.3 418.5,463.1 418.0,460.9 417.7,458.8 417.6,457.0 417.5,455.1 417.6,453.4 417.8,451.6 418.0,449.8 418.4,448.1 418.9,446.3 419.5,444.5 420.2,442.7 421.0,440.9 422.0,439.1 423.0,437.4 424.3,435.5 425.7,433.6 427.3,431.8 428.9,430.0 430.6,428.3 432.4,426.7 434.2,425.1 436.1,423.6 438.1,422.2 440.2,420.9 442.3,419.7 444.4,418.7 446.6,417.9 448.8,417.2 451.1,416.7 453.4,416.3 455.7,416.0 457.8,415.7 459.5,415.5 461.1,415.4 462.7,415.4 464.3,415.4 465.9,415.4 467.5,415.4 470.5,412.0 471.8,400.0 483.4,330.0 483.6,310.2 482.0,309.8 480.3,309.4 478.7,309.0 477.1,308.6 475.5,308.1 474.1,307.5 472.8,306.8 471.6,305.9 470.4,304.9 469.3,304.0 468.3,303.0 467.4,302.2 466.9,301.7 466.4,301.4 465.9,301.0 465.5,300.6 465.1,300.1 464.7,299.5 464.0,297.9 463.4,295.8 462.9,293.4 462.5,290.9 462.1,288.4 461.7,286.1 461.4,284.3 461.0,282.4 460.7,280.7 460.5,278.9 460.4,277.2 460.4,275.4 460.6,273.6 460.8,271.8 461.2,270.0 461.7,268.2 462.3,266.4 463.0,264.7 463.9,262.9 464.9,261.1 466.0,259.3 467.2,257.7 468.4,256.1 469.7,254.6 470.9,253.4 472.0,252.3 473.2,251.3 474.5,250.4 476.0,249.5 477.7,248.6 481.1,247.2 485.1,245.9 489.6,244.6 494.3,243.4 499.0,242.2 503.5,241.0 543.6,230.2" fill="#fef978" />
<polygon points="678.7,204.4 560.0,235.8 490.0,254.9 490.0,264.3 560.0,244.0 679.5,212.0" fill="#cdb05e" />
<polygon points="490.0,254.9 488.4,255.3 486.8,255.6 485.1,255.9 483.6,256.3 482.1,256.8 480.7,257.4 479.6,258.0 478.7,258.7 477.7,259.4 476.9,260.3 476.1,261.1 475.4,262.1 474.7,263.3 474.2,264.5 473.7,265.9 473.3,267.3 473.0,268.7 472.7,270.1 472.5,271.4 472.4,272.7 472.3,274.0 472.3,275.3 472.4,276.7 472.5,278.1 472.7,279.8 473.0,281.6 473.4,283.4 473.9,285.2 474.3,287.0 474.7,288.8 474.7,288.8 474.7,287.9 474.7,287.1 474.6,286.2 474.6,285.4 474.6,284.5 474.7,283.5 474.9,282.0 475.1,280.4 475.4,278.8 475.8,277.1 476.2,275.5 476.7,274.1 477.1,273.1 477.6,272.1 478.2,271.2 478.7,270.3 479.4,269.5 480.1,268.8 481.0,268.1 482.0,267.4 483.0,266.8 484.1,266.3 485.1,265.8 486.1,265.4 486.8,265.1 487.4,264.9 488.1,264.8 488.7,264.6 489.4,264.5 490.0,264.3" fill="url(#gInL)" />
<polygon points="678.2,203.9 813.6,328.2 814.0,335.4 679.5,212.0" fill="#9a884e" />
<polygon points="479.5,428.7 476.8,428.2 474.1,427.6 471.4,427.1 468.7,426.6 466.1,426.2 463.5,426.1 461.2,426.1 458.9,426.3 456.6,426.5 454.3,426.9 452.2,427.4 450.1,428.1 448.1,428.9 446.2,429.9 444.4,431.0 442.6,432.2 440.9,433.4 439.4,434.8 438.0,436.2 436.8,437.7 435.6,439.2 434.5,440.8 433.5,442.5 432.7,444.1 432.0,445.6 431.4,447.2 430.9,448.8 430.5,450.4 430.2,452.0 430.0,453.5 429.9,454.9 429.9,456.3 430.0,457.6 430.2,459.0 430.4,460.3 430.7,461.5 431.0,462.6 431.5,463.6 431.9,464.6 432.4,465.5 432.9,466.5 433.4,467.5 433.4,467.5 433.5,466.0 433.6,464.6 433.6,463.1 433.7,461.7 433.9,460.2 434.1,458.8 434.4,457.4 434.7,456.1 435.1,454.7 435.5,453.4 436.1,452.1 436.7,450.8 437.6,449.4 438.6,448.0 439.7,446.6 440.9,445.3 442.1,444.0 443.4,442.8 444.8,441.5 446.3,440.3 447.9,439.1 449.5,438.0 451.1,437.0 452.8,436.1 454.5,435.4 456.2,434.8 457.9,434.3 459.7,433.9 461.5,433.6 463.5,433.4 466.1,433.4 468.9,433.6 471.9,434.0 474.9,434.5 477.9,435.0 480.8,435.4" fill="url(#gInB)" />
<polygon points="480.2,432.1 695.9,477.7 695.9,477.7 698.0,478.4 700.2,479.1 702.4,479.8 704.5,480.6 706.6,481.4 708.6,482.4 710.5,483.6 712.5,484.8 714.3,486.2 716.1,487.7 717.7,489.2 719.2,490.8 720.3,492.3 721.3,493.9 722.1,495.5 722.9,497.1 723.7,498.8 724.5,500.4 724.5,500.4 723.4,498.9 722.4,497.4 721.4,495.9 720.4,494.5 719.2,493.1 718.0,491.8 716.6,490.6 715.1,489.5 713.6,488.4 712.0,487.5 710.3,486.5 708.6,485.6 706.6,484.7 704.5,483.8 702.4,483.0 700.2,482.2 698.0,481.4 695.9,480.6 480.8,435.2" fill="#a8924e" />
<polygon points="496.4,306.2 498.4,306.2 480.6,431.0 478.4,431.0" fill="#7e6e3c" />
<defs><linearGradient id="gRing" gradientUnits="userSpaceOnUse" x1="553" y1="0" x2="688" y2="0"><stop offset="0" stop-color="#a08a4a"/><stop offset="0.5" stop-color="#b8a058"/><stop offset="1" stop-color="#cdb864"/></linearGradient></defs>
<polygon points="682.7,379.5 684.2,374.5 685.2,369.5 685.7,364.5 685.6,359.5 685.1,354.6 684.1,349.8 682.6,345.1 680.6,340.6 678.2,336.3 675.3,332.2 672.1,328.4 668.4,324.9 664.4,321.7 660.1,318.9 655.5,316.3 650.6,314.2 645.5,312.5 640.2,311.1 634.7,310.2 629.2,309.7 623.6,309.6 617.9,309.9 612.3,310.6 606.7,311.8 601.2,313.3 595.9,315.3 590.7,317.6 585.7,320.3 581.0,323.3 576.5,326.7 572.4,330.4 568.6,334.3 565.2,338.5 562.2,342.9 559.6,347.5 557.5,352.3 555.8,357.1 554.6,362.1 553.9,367.1 553.7,372.1 554.0,377.0 554.9,382.0 556.2,386.7 558.0,391.4 560.3,395.9 563.0,400.1 566.2,404.1 569.8,407.8 573.8,411.2 578.2,414.3 582.9,416.9 587.9,419.2 593.2,421.1 598.7,422.6 604.3,423.6 610.1,424.2 615.9,424.3 621.8,423.9 627.6,423.1 633.4,421.9 639.1,420.2 644.6,418.1 649.9,415.6 655.0,412.8 659.8,409.5 664.3,406.0 668.4,402.1 672.1,398.0 675.5,393.6 678.3,389.1 680.8,384.3" fill="url(#gRing)" />
<polygon points="683.8,382.5 685.3,377.6 686.2,372.5 686.7,367.5 686.7,362.5 686.2,357.6 685.1,352.8 683.6,348.1 681.7,343.6 679.2,339.3 676.4,335.2 673.1,331.4 669.4,327.8 665.4,324.6 661.1,321.8 656.5,319.2 651.6,317.1 646.5,315.4 641.2,314.0 635.7,313.1 630.2,312.5 624.5,312.4 618.9,312.8 613.3,313.5 607.7,314.6 602.2,316.2 596.8,318.2 591.6,320.5 586.6,323.2 581.9,326.2 577.5,329.6 573.3,333.3 569.5,337.2 566.1,341.4 563.1,345.9 560.5,350.5 558.4,355.2 556.7,360.1 555.6,365.1 554.9,370.1 554.7,375.1 555.0,380.1 555.8,385.0 557.1,389.8 558.9,394.4 561.2,398.9 564.0,403.2 567.2,407.2 570.8,410.9 574.8,414.3 579.2,417.4 583.9,420.1 588.9,422.3 594.2,424.2 599.7,425.7 605.3,426.7 611.1,427.3 616.9,427.4 622.8,427.0 628.6,426.3 634.4,425.0 640.1,423.3 645.6,421.2 651.0,418.8 656.0,415.9 660.8,412.6 665.3,409.1 669.5,405.2 673.2,401.1 676.5,396.7 679.4,392.1 681.8,387.4" fill="#fef978" />
<polygon points="668.3,379.1 669.4,375.4 670.2,371.6 670.5,367.8 670.5,364.1 670.2,360.4 669.4,356.7 668.3,353.2 666.8,349.7 665.0,346.5 662.8,343.4 660.4,340.5 657.6,337.8 654.6,335.4 651.3,333.2 647.8,331.3 644.1,329.6 640.2,328.3 636.2,327.3 632.1,326.6 627.9,326.2 623.6,326.1 619.4,326.3 615.1,326.9 610.8,327.8 606.7,328.9 602.6,330.4 598.7,332.2 594.9,334.3 591.4,336.6 588.0,339.1 584.9,341.9 582.0,344.9 579.5,348.1 577.2,351.5 575.3,354.9 573.7,358.5 572.4,362.2 571.6,366.0 571.1,369.8 570.9,373.5 571.2,377.3 571.8,381.0 572.8,384.6 574.2,388.1 576.0,391.5 578.0,394.7 580.5,397.7 583.2,400.5 586.2,403.0 589.5,405.3 593.1,407.3 596.9,409.0 600.8,410.4 604.9,411.5 609.2,412.3 613.5,412.7 617.9,412.8 622.3,412.5 626.7,411.9 631.0,411.0 635.3,409.8 639.5,408.2 643.5,406.3 647.3,404.2 650.9,401.7 654.3,399.1 657.4,396.2 660.2,393.1 662.7,389.8 664.9,386.4 666.8,382.8" fill="url(#gRing)" />
<polygon points="667.2,376.1 668.3,372.4 669.1,368.6 669.5,364.8 669.5,361.1 669.1,357.4 668.4,353.7 667.2,350.2 665.8,346.8 663.9,343.5 661.8,340.4 659.3,337.5 656.6,334.9 653.6,332.4 650.3,330.2 646.8,328.3 643.1,326.7 639.2,325.4 635.2,324.4 631.1,323.6 626.9,323.2 622.6,323.2 618.4,323.4 614.1,324.0 609.9,324.8 605.7,326.0 601.7,327.5 597.7,329.3 594.0,331.3 590.4,333.6 587.0,336.2 583.9,339.0 581.1,342.0 578.5,345.2 576.3,348.5 574.3,352.0 572.7,355.6 571.5,359.3 570.6,363.0 570.1,366.8 570.0,370.5 570.2,374.3 570.9,378.0 571.9,381.6 573.3,385.1 575.0,388.4 577.1,391.6 579.5,394.6 582.2,397.4 585.3,399.9 588.6,402.2 592.1,404.2 595.9,405.9 599.8,407.3 603.9,408.4 608.2,409.2 612.5,409.6 616.9,409.7 621.3,409.4 625.7,408.8 630.0,407.9 634.3,406.7 638.4,405.1 642.4,403.2 646.2,401.1 649.9,398.7 653.2,396.0 656.3,393.1 659.2,390.0 661.7,386.7 663.9,383.3 665.7,379.8" fill="#fef978" />
<polyline points="559.6,223.8 503.5,239.4 503.5,239.4 498.8,240.7 493.9,242.0 489.1,243.4 484.4,244.7 480.2,246.1 476.7,247.6 475.0,248.5 473.5,249.4 472.2,250.3 471.0,251.3 469.9,252.4 468.7,253.6 467.4,255.1 466.1,256.9 464.9,258.7 463.8,260.6 462.9,262.5 462.0,264.4 461.3,266.2 460.7,268.0 460.2,269.9 459.8,271.7 459.6,273.6 459.4,275.4 459.4,277.2 459.5,278.9 459.7,280.7 460.0,282.5 460.3,284.3 460.7,286.1 461.2,288.3 461.7,290.6 462.4,292.9 463.1,295.2 463.9,297.5 464.7,299.8 465.6,302.1 466.6,304.4 467.7,306.8 468.8,309.0 470.1,311.2 471.4,313.2 472.9,314.9 474.6,316.5 476.3,318.1 478.1,319.6 479.6,321.0 480.7,322.6 481.3,323.8 481.7,325.1 482.0,326.3 482.2,327.5 482.4,328.8 482.7,330.0 470.8,400.0 469.5,412.0 467.5,414.4 456.8,414.7 454.5,415.3 452.3,415.9 450.0,416.5 447.8,417.1 445.5,417.8 443.4,418.7 441.3,419.8 439.2,421.0 437.1,422.3 435.2,423.7 433.2,425.2 431.4,426.7 429.6,428.3 427.9,430.0 426.3,431.8 424.7,433.6 423.3,435.5 422.0,437.4 421.0,439.1 420.0,440.9 419.2,442.7 418.5,444.5 417.9,446.3 417.4,448.1 417.0,449.8 416.8,451.6 416.6,453.4 416.5,455.1 416.6,457.0 416.7,458.8 417.0,461.0 417.4,463.2 417.9,465.5 418.5,467.8 419.2,470.1 420.0,472.2 420.8,474.1 421.8,475.9 422.8,477.7 423.8,479.5 424.9,481.2 426.0,482.9 427.0,484.5 428.0,486.2 429.1,487.8 430.2,489.4 431.4,490.8 432.7,492.2 434.2,493.5 435.8,494.6 437.4,495.7 439.2,496.7 441.2,497.6 443.4,498.6 447.4,500.1 452.1,501.5 457.2,502.9 462.5,504.3 467.8,505.6 472.9,507.0 515.3,516.0" fill="none" stroke="#1467f5" stroke-width="2.8" stroke-linejoin="round"/>
<polyline points="635.9,203.8 672.6,195.0 680.0,194.3 686.0,195.3 690.2,198.4 825.5,323.2 827.8,328.0 829.0,346.8" fill="none" stroke="#0d44f5" stroke-width="2.8" stroke-linejoin="round"/>
<polyline points="762.5,404.9 721.9,472.6 723.7,473.8 725.5,475.0 727.3,476.1 729.0,477.4 730.7,478.7 732.2,480.2 733.7,482.0 735.1,484.0 736.5,486.1 737.7,488.3 738.7,490.6 739.6,492.9 740.4,495.5 741.0,498.4 741.4,501.3 741.7,504.2 741.8,507.1 741.8,509.9 741.6,512.5 741.3,515.0 740.8,517.5 740.2,520.0 739.5,522.5 738.6,524.9 737.5,527.5 736.3,530.1 735.0,532.6 733.5,535.1 731.9,537.5 730.2,539.8 728.4,542.0 726.4,544.2 724.3,546.2 722.1,548.2 719.8,550.0 717.4,551.6 714.7,553.1 711.9,554.5 709.0,555.7 706.0,556.8 703.0,557.5 700.1,558.0 697.7,558.1 695.3,557.9 693.0,557.6 690.6,557.0 688.1,556.5 685.3,555.9 680.7,555.0 675.6,553.8 670.1,552.5 664.5,551.2 658.9,549.8 653.5,548.5 609.1,536.9" fill="none" stroke="#1467f5" stroke-width="2.8" stroke-linejoin="round"/>
<polyline points="606.6,266.0 623.4,341.0" fill="none" stroke="#1467f5" stroke-width="2" />
<polyline points="639.0,355.8 797.0,390.5" fill="none" stroke="#dc1822" stroke-width="1.8" />
<polyline points="622.1,366.8 569.3,508.7" fill="none" stroke="#1f9a44" stroke-width="1.8" />
<polygon points="595.5,235.8 613.8,239.8 616.2,249.8 610.2,266.1 591.5,262.1 588.8,252.2" fill="#1b6cf0" stroke="#1b6cf0" stroke-width="1" stroke-linejoin="round"/>
<polygon points="803.1,379.0 818.4,382.6 820.5,391.8 815.4,406.8 799.8,403.0 797.5,394.0" fill="#dc1e28" stroke="#dc1e28" stroke-width="1" stroke-linejoin="round"/>
<polygon points="558.0,506.7 575.0,510.4 577.2,519.9 571.6,535.3 554.3,531.4 551.8,522.1" fill="#22a049" stroke="#22a049" stroke-width="1" stroke-linejoin="round"/>
<polygon points="621.0,339.8 636.5,343.4 638.5,352.5 633.4,367.4 617.6,363.7 615.2,354.7" fill="#ffffff" stroke="#ffffff" stroke-width="1" stroke-linejoin="round"/>
</svg>
<div id="stl"><svg width="91" height="98" viewBox="83 34 91 98">
<path d="M97 34H134.5V59Q134.500 65 140.500 65H165V122.500Q165 127.300 160 127.300H95Q90 127.300 90 122.500V76H119.500Q124 76 124 71.500V47.700Q124 43.200 119.500 43.200H90V41Q90 34 97 34Z" fill="#3d48c9"/>
<path d="M139 35L163.700 60.300H145Q139 60.300 139 54.300Z" fill="#3d48c9"/>
<path d="M83 47.300H117.500Q120 47.300 120 49.800V69.400Q120 71.900 117.500 71.900H83Z" fill="#3d48c9"/>
<rect x="102.700" y="81.100" width="49.500" height="4.700" fill="#fff"/>
<rect x="102.700" y="95.700" width="49.500" height="4.700" fill="#fff"/>
<rect x="102.700" y="109.600" width="49.500" height="4.800" fill="#fff"/>
<text x="84.300" y="65.300" font-family="Liberation Sans, sans-serif" font-weight="bold" font-size="13" fill="#fff">STL</text>
</svg></div>
<svg class="abs" style="left:0;top:180px" width="14" height="34" viewBox="0 180 14 34"><path d="M13 181.500L0 197L13 211.500" fill="#fff" stroke="#c8c8c8" stroke-width="1"/><rect x="12.500" y="182.600" width="1.500" height="28" fill="#fff"/></svg>
<div id="panel">
 <div class="lbl" style="left:16px;top:25px;color:#e0202c">X</div>
 <div class="lbl" style="left:16px;top:66px;color:#2ea043">Y</div>
 <div class="lbl" style="left:16px;top:107px;color:#2b74e8">Z</div>
 <div class="fld" style="left:33px;top:16px;width:179px;border-bottom:2px solid #ababab"><span style="left:5px">92.7848</span><span class="u" style="right:8px">mm</span></div>
 <div class="fld" style="left:33px;top:57px;width:179px;height:32px"><span style="left:5px">91.0188</span><span class="u" style="right:8px">mm</span></div>
 <div class="fld" style="left:33px;top:99px;width:179px"><span style="left:5px">7</span><span class="u" style="right:8px">mm</span></div>
 <div class="fld" style="left:220px;top:16px;width:179px;border-bottom:2px solid #ababab"><span style="left:5px">100</span><span class="u" style="right:8px">%</span></div>
 <div class="fld" style="left:220px;top:57px;width:179px;height:32px"><span style="left:5px">100</span><span class="u" style="right:8px">%</span></div>
 <div class="fld" style="left:220px;top:99px;width:179px"><span style="left:5px">100</span><span class="u" style="right:8px">%</span></div>
 <div class="cb" style="left:113px;top:152px"><svg width="19" height="19" viewBox="0 0 19 19"><path d="M6.300 9.600L8.600 11.800L12.800 7.400" stroke="#111" stroke-width="2.100" fill="none"/></svg></div>
 <div class="cb" style="left:113px;top:188px"></div>
 <div class="cbl" style="left:142px;top:154px">Snap Scaling</div>
 <div class="cbl" style="left:142px;top:191px;letter-spacing:0.3px">Uniform Scaling</div>

</div>
<svg class="abs" style="left:55px;top:320px" width="50" height="50" viewBox="55 320 50 50"><g fill="none" stroke="#0a0a40" stroke-width="2.700" stroke-linecap="round" stroke-linejoin="round"><path d="M68.400 337.300H77.400A9.700 9.700 0 1 1 67.700 347.600"/><path d="M74 331.900L68.400 337.300L74 342.800"/></g></svg>
<svg class="abs" style="left:12px;top:602px" width="20" height="14" viewBox="0 0 20 14"><path d="M2.400 9.800L8.300 3.600L14.100 9.800" stroke="#808080" stroke-width="1.600" fill="none"/></svg>
<div class="t" style="left:45px;top:602px;letter-spacing:0.2px">Object list</div>
<svg class="abs" style="left:12px;top:636px" width="24" height="22" viewBox="12 636 24 22"><path d="M15 654.400H32.500" stroke="#666" stroke-width="1.900"/><path d="M19 648.600L29.900 638.400L32.300 640.900L21.500 651.400L18.600 652.100Z" fill="#666"/></svg>
<div class="t" style="left:53px;top:639px;letter-spacing:-0.35px">STL00896-3</div>
<div class="t" style="left:12px;top:672px">190.6 x 200.0 x 30.0 mm</div>
<svg class="abs" style="left:10px;top:704px" width="200" height="40" viewBox="10 704 200 40">
 <g fill="none" stroke="#0b0a45" stroke-width="2.300" stroke-linejoin="round">
  <path d="M28.500 709.800L39.800 716.200V729.200L28.500 735.500L17.200 729.200V716.200Z"/>
  <path d="M17.200 716.200L28.500 722.700L39.800 716.200M28.500 722.700V735.500"/>
 </g>
 <g stroke="#707070" stroke-width="2.300" stroke-linejoin="round">
  <path d="M57 717.800L63.500 711.500H80V728L73.500 734.200H57Z" fill="#fafafa"/>
  <path d="M57 717.800H73.500V734.200H57Z" fill="#757575"/>
  <path d="M73.500 717.800L80 711.500" fill="none"/>
 </g>
 <g stroke="#0b0a45" stroke-width="2.300" stroke-linejoin="round">
  <path d="M97 717.800L103.500 711.500H120V728L113.500 734.200H97Z" fill="#fff"/>
  <path d="M97 717.800L103.500 711.500H120L113.500 717.800Z" fill="#0b0a45"/>
  <path d="M113.500 717.800V734.200" fill="none"/>
 </g>
 <g stroke="#707070" stroke-width="2.300" stroke-linejoin="round">
  <path d="M137 711.500H154.500L161 717.800V734.200H143.500L137 728Z" fill="#fafafa"/>
  <path d="M137 711.500L143.500 717.800V734.200L137 728Z" fill="#757575"/>
  <path d="M143.500 717.800H161" fill="none"/>
 </g>
 <g stroke="#707070" stroke-width="2.300" stroke-linejoin="round">
  <path d="M177 717.800L183.500 711.500H200V728L193.500 734.200H177Z" fill="#fafafa"/>
  <path d="M193.500 717.800L200 711.500V728L193.500 734.200Z" fill="#757575"/>
  <path d="M177 717.800H193.500" fill="none"/>
 </g>
</svg>

</body></html>
